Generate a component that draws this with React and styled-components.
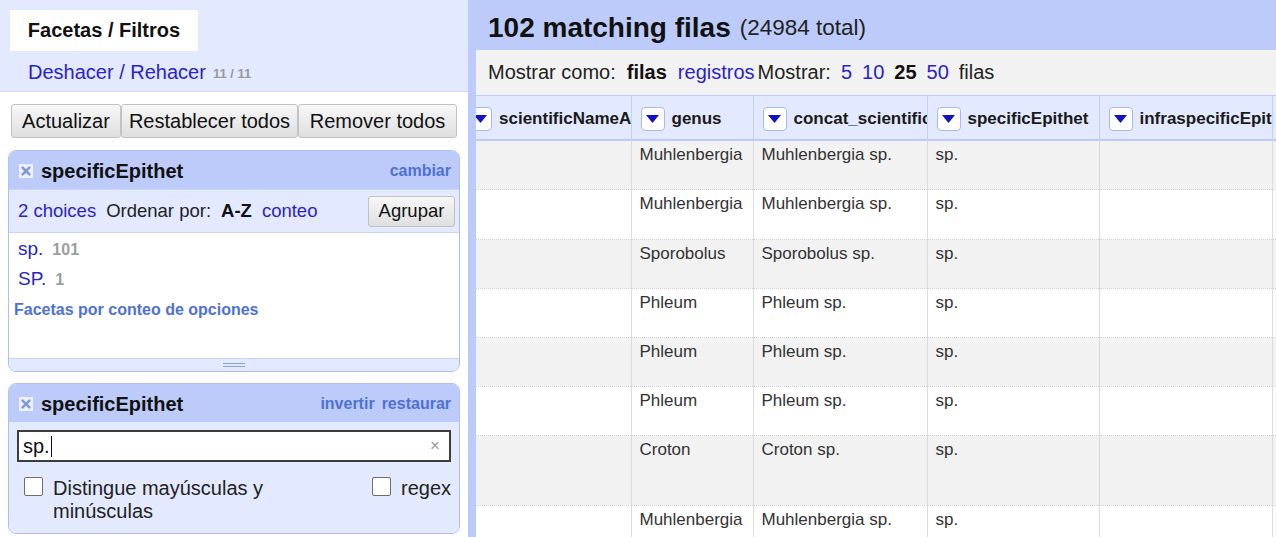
import React, { useLayoutEffect, useRef } from "react";
import styled, { createGlobalStyle } from "styled-components";

const BLUE = "#bccbf9";
const LAVENDER = "#e3e9ff";
const LINK = "#2b22c8";
const SOFT_LINK = "#4e71d6";

const GlobalStyle = createGlobalStyle`
  html, body { margin: 0; padding: 0; }
  body {
    font-family: "Liberation Sans", Arial, sans-serif;
    background: #fff;
    color: #222;
  }
`;

const Page = styled.div`
  display: flex;
  width: 1276px;
  height: 537px;
  overflow: hidden;
`;

/* ---------- left panel ---------- */

const LeftPanel = styled.div`
  width: 468px;
  flex: none;
  display: flex;
  flex-direction: column;
  background: #fff;
`;

const LeftHeader = styled.div`
  height: 92px;
  box-sizing: border-box;
  padding: 10px 0 0 10px;
  background: ${LAVENDER};
  border-bottom: 1px solid #d3dbf6;
`;

const Tab = styled.div`
  width: 188px;
  height: 41px;
  display: flex;
  align-items: center;
  justify-content: center;
  background: #fff;
  font-size: 20px;
  font-weight: bold;
  color: #111;
`;

const UndoRow = styled.div`
  height: 42px;
  display: flex;
  align-items: center;
  gap: 7px;
  padding-left: 18px;
`;

const UndoLink = styled.span`
  font-size: 20px;
  color: ${LINK};
`;

const UndoCount = styled.span`
  font-size: 13px;
  font-weight: bold;
  color: #9a9a9a;
  padding-top: 3px;
`;

const ButtonRow = styled.div`
  display: flex;
  margin: 12px 0 0 11px;
`;

const Button = styled.button`
  width: ${(p) => p.$w}px;
  height: ${(p) => p.$h || 34}px;
  padding: 0;
  box-sizing: border-box;
  font-family: inherit;
  font-size: ${(p) => p.$fs || 20}px;
  color: #111;
  border: 1px solid #c2c2c2;
  border-radius: 3px;
  background: linear-gradient(#f7f7f7, #dfdfdf);
  flex: none;
`;

const Facet = styled.div`
  margin: ${(p) => p.$top}px 8px 0;
  border: 1px solid #aebff0;
  border-radius: 8px;
  overflow: hidden;
  background: #fff;
`;

const FacetHeader = styled.div`
  height: 38px;
  display: flex;
  align-items: center;
  padding: 2px 8px 0 10px;
  box-sizing: border-box;
  background: ${BLUE};
`;

const FacetTitle = styled.div`
  flex: 1;
  margin-left: 8px;
  font-size: 20px;
  font-weight: bold;
  color: #111;
`;

const FacetAction = styled.span`
  margin-left: 7px;
  font-size: 16px;
  font-weight: bold;
  color: ${SOFT_LINK};
`;

const FacetControls = styled.div`
  height: 44px;
  box-sizing: border-box;
  display: flex;
  align-items: center;
  gap: 10px;
  padding: 0 4px 0 9px;
  background: ${LAVENDER};
  border-top: 1px solid #c9d5f8;
  border-bottom: 1px solid #c9d5f8;
  font-size: 18.5px;
  color: #222;
`;

const Link = styled.span`
  color: ${LINK};
`;

const Strong = styled.span`
  font-weight: bold;
  color: #111;
`;

const PushRight = styled.div`
  margin-left: auto;
  display: flex;
`;

const FacetBody = styled.div`
  height: 125px;
  box-sizing: border-box;
  padding: 1px 9px;
`;

const Choice = styled.div`
  display: flex;
  align-items: baseline;
  gap: 9px;
  line-height: 29px;
  font-size: 19px;
  color: ${LINK};
`;

const ChoiceCount = styled.span`
  font-size: 16px;
  font-weight: bold;
  color: #9d9d9d;
`;

const FacetNote = styled.div`
  margin: 7px 0 0 -4px;
  font-size: 16px;
  font-weight: bold;
  color: ${SOFT_LINK};
`;

const Grip = styled.div`
  height: 12px;
  display: flex;
  align-items: center;
  justify-content: center;
  background: ${LAVENDER};
  border-top: 1px solid #c9d5f8;
`;

const GripLines = styled.div`
  width: 22px;
  height: 2px;
  border-top: 1px solid #8aa2de;
  border-bottom: 1px solid #8aa2de;
`;

const FilterBody = styled.div`
  padding: 8px 8px 10px;
  background: ${LAVENDER};
`;

const SearchBox = styled.div`
  height: 32px;
  box-sizing: border-box;
  display: flex;
  align-items: center;
  padding: 0 9px 0 4px;
  background: #fff;
  border: 2px solid #3c3c3c;
  font-size: 20px;
  color: #111;
`;

const Caret = styled.span`
  width: 1px;
  height: 21px;
  margin-left: 1px;
  background: #111;
`;

const ClearMark = styled.span`
  margin-left: auto;
  font-size: 17px;
  color: #9a9a9a;
`;

const OptionRow = styled.div`
  display: flex;
  justify-content: space-between;
  align-items: flex-start;
  margin-top: 15px;
  padding-left: 7px;
`;

const Option = styled.label`
  display: flex;
  align-items: flex-start;
  gap: 10px;
  font-size: 20px;
  line-height: 23px;
  color: #222;
`;

const OptionText = styled.span`
  width: ${(p) => p.$w}px;
`;

const Box = styled.span`
  width: 19px;
  height: 19px;
  flex: none;
  box-sizing: border-box;
  border: 1px solid #6e6e6e;
  border-radius: 2px;
  background: #fff;
`;

/* ---------- right panel ---------- */

const RightPanel = styled.div`
  flex: 1;
  min-width: 0;
  display: flex;
  flex-direction: column;
  padding-left: 8px;
  background: ${BLUE};
`;

const ViewHeader = styled.div`
  height: 50px;
  flex: none;
  display: flex;
  align-items: center;
  gap: 9px;
  padding: 5px 0 0 12px;
  box-sizing: border-box;
  white-space: nowrap;
`;

const MatchCount = styled.span`
  font-size: 28px;
  font-weight: bold;
  color: #111;
`;

const TotalCount = styled.span`
  font-size: 22.5px;
  color: #222;
`;

const ViewBar = styled.div`
  height: 45px;
  flex: none;
  display: flex;
  align-items: center;
  gap: 3px;
  padding-left: 12px;
  background: #f2f2f2;
  font-size: 20px;
  color: #222;
  white-space: nowrap;
`;

const BarGroup = styled.div`
  display: flex;
  gap: ${(p) => p.$gap}px;
`;

const TableScroll = styled.div`
  flex: 1;
  overflow: hidden;
  background: #fff;
  border-top: 1px solid ${BLUE};
`;

const Grid = styled.table`
  border-collapse: collapse;
  table-layout: fixed;
  width: ${(p) => p.$w}px;
`;

const HeadCell = styled.th`
  height: 41px;
  padding: 2px 0 0 9px;
  text-align: left;
  background: ${LAVENDER};
  border-right: 1px solid #c4d0f6;
  border-bottom: 2px solid ${BLUE};
  overflow: hidden;
`;

const HeadInner = styled.div`
  display: flex;
  align-items: center;
  gap: 7px;
  font-size: 17px;
  font-weight: bold;
  color: #1a1a1a;
  white-space: nowrap;
`;

const DropButton = styled.span`
  width: 24px;
  height: 24px;
  flex: none;
  box-sizing: border-box;
  display: flex;
  align-items: center;
  justify-content: center;
  background: #fff;
  border: 1px solid #a9b9ea;
  border-radius: 4px;
`;

const Row = styled.tr`
  height: ${(p) => p.$h}px;
  background: ${(p) => (p.$odd ? "#f2f2f2" : "#fff")};
`;

const Cell = styled.td`
  vertical-align: top;
  padding: 4px 7px 0 8px;
  font-size: 17px;
  color: #333;
  white-space: nowrap;
  overflow: hidden;
  border-right: 1px solid #dcdcdc;
  border-bottom: 1px dotted #d2d2d2;
`;

const CloseIcon = () => (
  <svg width="14" height="14" viewBox="0 0 14 14">
    <rect width="14" height="14" fill="#eef2fe" />
    <path
      d="M3.6 3.6 L10.4 10.4 M10.4 3.6 L3.6 10.4"
      stroke="#7f9bdc"
      strokeWidth="2.6"
      strokeLinecap="round"
    />
  </svg>
);

const DownArrow = () => (
  <svg width="13" height="8" viewBox="0 0 13 8">
    <path d="M0 0 H13 L6.5 8 Z" fill="#1212c4" />
  </svg>
);

const columns = [
  { name: "scientificNameAuthorship", width: 172 },
  { name: "genus", width: 122 },
  { name: "concat_scientificName", width: 174 },
  { name: "specificEpithet", width: 172 },
  { name: "infraspecificEpithet", width: 173 },
  { name: "taxonRank", width: 170 },
];

const rows = [
  { genus: "Muhlenbergia", h: 49 },
  { genus: "Muhlenbergia", h: 50 },
  { genus: "Sporobolus", h: 49 },
  { genus: "Phleum", h: 49 },
  { genus: "Phleum", h: 49 },
  { genus: "Phleum", h: 49 },
  { genus: "Croton", h: 70 },
  { genus: "Muhlenbergia", h: 49 },
];

export default function App() {
  const scrollRef = useRef(null);

  useLayoutEffect(() => {
    if (scrollRef.current) scrollRef.current.scrollLeft = 17;
  }, []);

  const tableWidth = columns.reduce((s, c) => s + c.width, 0);

  return (
    <>
      <GlobalStyle />
      <Page>
        <LeftPanel>
          <LeftHeader>
            <Tab>Facetas / Filtros</Tab>
            <UndoRow>
              <UndoLink>Deshacer / Rehacer</UndoLink>
              <UndoCount>11 / 11</UndoCount>
            </UndoRow>
          </LeftHeader>

          <ButtonRow>
            <Button $w={110}>Actualizar</Button>
            <Button $w={177}>Restablecer todos</Button>
            <Button $w={159}>Remover todos</Button>
          </ButtonRow>

          <Facet $top={12}>
            <FacetHeader>
              <CloseIcon />
              <FacetTitle>specificEpithet</FacetTitle>
              <FacetAction>cambiar</FacetAction>
            </FacetHeader>
            <FacetControls>
              <Link>2 choices</Link>
              <span>Ordenar por:</span>
              <Strong>A-Z</Strong>
              <Link>conteo</Link>
              <PushRight>
                <Button $w={87} $h={31} $fs={18.5}>Agrupar</Button>
              </PushRight>
            </FacetControls>
            <FacetBody>
              <Choice>
                sp.<ChoiceCount>101</ChoiceCount>
              </Choice>
              <Choice>
                SP.<ChoiceCount>1</ChoiceCount>
              </Choice>
              <FacetNote>Facetas por conteo de opciones</FacetNote>
            </FacetBody>
            <Grip>
              <GripLines />
            </Grip>
          </Facet>

          <Facet $top={11}>
            <FacetHeader>
              <CloseIcon />
              <FacetTitle>specificEpithet</FacetTitle>
              <FacetAction>invertir</FacetAction>
              <FacetAction>restaurar</FacetAction>
            </FacetHeader>
            <FilterBody>
              <SearchBox>
                sp.<Caret />
                <ClearMark>×</ClearMark>
              </SearchBox>
              <OptionRow>
                <Option>
                  <Box />
                  <OptionText $w={240}>Distingue mayúsculas y minúsculas</OptionText>
                </Option>
                <Option>
                  <Box />
                  <span>regex</span>
                </Option>
              </OptionRow>
            </FilterBody>
          </Facet>
        </LeftPanel>

        <RightPanel>
          <ViewHeader>
            <MatchCount>102 matching filas</MatchCount>
            <TotalCount>(24984 total)</TotalCount>
          </ViewHeader>
          <ViewBar>
            <BarGroup $gap={11}>
              <span>Mostrar como:</span>
              <Strong>filas</Strong>
              <Link>registros</Link>
            </BarGroup>
            <BarGroup $gap={10}>
              <span>Mostrar:</span>
              <Link>5</Link>
              <Link>10</Link>
              <Strong>25</Strong>
              <Link>50</Link>
              <span>filas</span>
            </BarGroup>
          </ViewBar>
          <TableScroll ref={scrollRef}>
            <Grid $w={tableWidth}>
              <colgroup>
                {columns.map((c) => (
                  <col key={c.name} style={{ width: c.width }} />
                ))}
              </colgroup>
              <thead>
                <tr>
                  {columns.map((c) => (
                    <HeadCell key={c.name}>
                      <HeadInner>
                        <DropButton>
                          <DownArrow />
                        </DropButton>
                        {c.name}
                      </HeadInner>
                    </HeadCell>
                  ))}
                </tr>
              </thead>
              <tbody>
                {rows.map((r, i) => (
                  <Row key={i} $h={r.h} $odd={i % 2 === 0}>
                    <Cell />
                    <Cell>{r.genus}</Cell>
                    <Cell>{r.genus} sp.</Cell>
                    <Cell>sp.</Cell>
                    <Cell />
                    <Cell />
                  </Row>
                ))}
              </tbody>
            </Grid>
          </TableScroll>
        </RightPanel>
      </Page>
    </>
  );
}
